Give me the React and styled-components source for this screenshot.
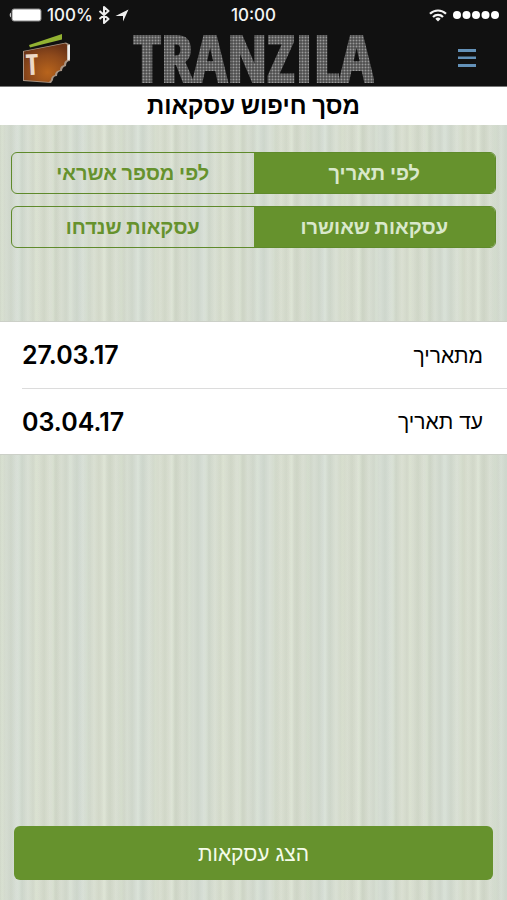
import React, { useState } from "react";
import styled, { createGlobalStyle } from "styled-components";

const GlobalStyle = createGlobalStyle`
  * {
    box-sizing: border-box;
  }
  body {
    margin: 0;
    background: #d3dacb;
    color: #000;
    font-family: Inter, "Liberation Sans", sans-serif;
  }
  button,
  input {
    font-family: inherit;
  }
`;

const Screen = styled.div`
  display: flex;
  flex-direction: column;
  min-height: 100vh;
  background-color: #d6dccf;
  background-image: repeating-linear-gradient(
      90deg,
      rgba(176, 188, 168, 0.14) 0px,
      rgba(255, 255, 255, 0) 3px,
      rgba(240, 246, 238, 0.16) 6px,
      rgba(176, 188, 168, 0.14) 11px
    ),
    repeating-linear-gradient(
      90deg,
      rgba(210, 220, 214, 0) 0px,
      rgba(210, 220, 216, 0.5) 19px,
      rgba(222, 226, 208, 0.3) 37px,
      rgba(210, 220, 214, 0) 61px
    ),
    repeating-linear-gradient(
      90deg,
      rgba(225, 236, 216, 0) 0px,
      rgba(225, 236, 216, 0.4) 2px,
      rgba(190, 198, 180, 0.25) 5px,
      rgba(225, 236, 216, 0) 17px
    );
`;

const TopBar = styled.header`
  background: #111;
  border-bottom: 1px solid #777;
`;

const StatusBar = styled.div`
  display: grid;
  grid-template-columns: 1fr auto 1fr;
  align-items: center;
  height: 30px;
  padding: 0 8px;
  color: #f4f4f4;
  font-size: 17px;
  font-weight: 500;
`;

const StatusGroup = styled.div`
  display: flex;
  align-items: center;
  justify-content: ${({ end }) => (end ? "flex-end" : "flex-start")};
  gap: ${({ end }) => (end ? "6px" : "5px")};
`;

const Brand = styled.div`
  display: grid;
  grid-template-columns: 1fr auto 1fr;
  align-items: center;
  height: 56px;
  padding: 0 21px;
`;

const BrandName = styled.span`
  font-family: "Noto Sans ExtraCondensed", "Open Sans Condensed",
    "Roboto Condensed", "Noto Sans Condensed", "Liberation Sans", sans-serif;
  font-size: 64px;
  font-weight: 700;
  line-height: 56px;
  color: transparent;
  -webkit-text-stroke: 2px transparent;
  background-color: #333;
  background-image: radial-gradient(circle, #9a9a9a 0, #6c6c6c 1px, #333 2px);
  background-size: 3px 3px;
  background-clip: text;
  -webkit-background-clip: text;
`;

const MenuButton = styled.button`
  display: flex;
  justify-self: end;
  padding: 10px;
  border: 0;
  background: none;
  color: #6391b8;
  cursor: pointer;
`;

const Title = styled.h1`
  margin: 0;
  background: #fff;
  font-size: 24px;
  font-weight: 700;
  line-height: 38px;
  text-align: center;
`;

const Filters = styled.div`
  display: flex;
  flex-direction: column;
  gap: 12px;
  padding: 27px 11px 73px;
`;

const Segmented = styled.div`
  display: flex;
  overflow: hidden;
  border: 1px solid #5f8a2b;
  border-radius: 6px;
`;

const Segment = styled.button`
  flex: 1;
  height: 40px;
  padding: 0;
  border: 0;
  background: ${({ selected }) => (selected ? "#66922d" : "transparent")};
  color: ${({ selected }) => (selected ? "#d9e8cb" : "#66922d")};
  font-size: 20px;
  font-weight: 700;
  cursor: pointer;
`;

const DateList = styled.div`
  background: #fff;
  border-top: 1px solid #ccd0c8;
  border-bottom: 1px solid #ccd0c8;
`;

const DateRow = styled.label`
  display: flex;
  align-items: center;
  justify-content: space-between;
  height: 66px;
  margin-left: 22px;
  padding-right: 24px;
  font-size: 21px;

  & + & {
    border-top: 1px solid #dcdcdc;
  }
`;

const DateInput = styled.input`
  width: 140px;
  padding: 0;
  border: 0;
  background: none;
  color: #000;
  font-size: 25px;
  font-weight: 600;
  text-align: left;
`;

const Footer = styled.footer`
  margin-top: auto;
  padding: 20px 14px;
`;

const SubmitButton = styled.button`
  display: block;
  width: 100%;
  height: 54px;
  border: 0;
  border-radius: 6px;
  background: #66922d;
  color: #f4fbe9;
  font-size: 21px;
  cursor: pointer;
`;

const BatteryIcon = () => (
  <svg width="34" height="14" viewBox="0 0 34 14">
    <path d="M3 4.5a3 3 0 0 0 0 5z" fill="#ccc" />
    <rect x="4" y="1" width="29" height="12" rx="2" fill="#fff" stroke="#888" />
  </svg>
);

const BluetoothIcon = () => (
  <svg width="12" height="18" viewBox="0 0 12 18" fill="none">
    <path
      d="M1.5 5l9 8L6 17V1l4.500 4-9 8"
      stroke="#eee"
      strokeWidth="2"
      strokeLinejoin="round"
    />
  </svg>
);

const LocationIcon = () => (
  <svg width="14" height="13" viewBox="0 0 14 13">
    <path d="M13.500 0.500L8 12.500V7H0.500z" fill="#eee" />
  </svg>
);

const WifiIcon = () => (
  <svg width="18" height="13" viewBox="0 0 18 13" fill="none" stroke="#f4f4f4">
    <path d="M1 4.800a11.300 11.300 0 0 1 16 0" strokeWidth="2.200" />
    <path d="M4 8a7 7 0 0 1 10 0" strokeWidth="2.200" />
    <path d="M9 12.500L6.300 9.800a3.800 3.800 0 0 1 5.400 0z" fill="#f4f4f4" stroke="none" />
  </svg>
);

const SignalDots = () => (
  <svg width="46" height="10" viewBox="0 0 46 10" fill="#fff">
    {[4, 13.5, 23, 32.5, 42].map((cx) => (
      <circle key={cx} cx={cx} cy="5" r="4" />
    ))}
  </svg>
);

const WalletLogo = () => (
  <svg width="52" height="52" viewBox="0 0 52 52">
    <defs>
      <radialGradient id="leather" cx="0.55" cy="0.75" r="0.75">
        <stop offset="0" stopColor="#b8641c" />
        <stop offset="0.6" stopColor="#8f4a1b" />
        <stop offset="1" stopColor="#6a3317" />
      </radialGradient>
    </defs>
    <path d="M8 13L41 2v5.500L9 15.500z" fill="#93b232" />
    <path
      d="M2 19L45 10.500l4 2V29q-4 0-4 5-4 1-4 5-5 0-5 5-4 0-4 4l-2 3L2 49z"
      fill="#a89484"
    />
    <path
      d="M3 19.500L44 11.500l2 1V28q-3 1-3 5-4 1-4 5-5 1-5 5-4 1-4 5l-2 2-25-2z"
      fill="url(#leather)"
    />
    <path d="M46.500 13.500l2.500-1v15l-2.500 1z" fill="#eee" />
    <text
      x="5"
      y="43"
      fill="#ecd8c6"
      fontFamily="Noto Sans ExtraCondensed, Open Sans Condensed, Roboto Condensed, Noto Sans Condensed, sans-serif"
      fontSize="29"
      fontWeight="700"
      transform="rotate(-3 12 32)"
    >
      T
    </text>
  </svg>
);

const MenuIcon = () => (
  <svg width="18" height="18" viewBox="0 0 18 18" fill="currentColor">
    <rect y="0" width="18" height="3" />
    <rect y="7.500" width="18" height="2.500" />
    <rect y="15" width="18" height="3" />
  </svg>
);

const SegmentedControl = ({ options, label }) => {
  const [selected, setSelected] = useState(options[0]);
  return (
    <Segmented role="group" aria-label={label}>
      {options.map((option) => (
        <Segment
          key={option}
          type="button"
          selected={option === selected}
          aria-pressed={option === selected}
          onClick={() => setSelected(option)}
        >
          {option}
        </Segment>
      ))}
    </Segmented>
  );
};

const DateField = ({ id, label, initial }) => {
  const [value, setValue] = useState(initial);
  return (
    <DateRow htmlFor={id}>
      <span>{label}</span>
      <DateInput
        id={id}
        dir="ltr"
        value={value}
        onChange={(e) => setValue(e.target.value)}
      />
    </DateRow>
  );
};

const App = () => (
  <>
    <GlobalStyle />
    <Screen>
      <TopBar>
        <StatusBar>
          <StatusGroup>
            <BatteryIcon />
            <span>100%</span>
            <BluetoothIcon />
            <LocationIcon />
          </StatusGroup>
          <span>10:00</span>
          <StatusGroup end>
            <WifiIcon />
            <SignalDots />
          </StatusGroup>
        </StatusBar>
        <Brand>
          <WalletLogo />
          <BrandName>TRANZILA</BrandName>
          <MenuButton type="button" aria-label="תפריט">
            <MenuIcon />
          </MenuButton>
        </Brand>
      </TopBar>
      <Title dir="rtl">מסך חיפוש עסקאות</Title>
      <Filters dir="rtl">
        <SegmentedControl label="חיפוש" options={["לפי תאריך", "לפי מספר אשראי"]} />
        <SegmentedControl label="סטטוס" options={["עסקאות שאושרו", "עסקאות שנדחו"]} />
      </Filters>
      <DateList dir="rtl">
        <DateField id="from" label="מתאריך" initial="27.03.17" />
        <DateField id="to" label="עד תאריך" initial="03.04.17" />
      </DateList>
      <Footer dir="rtl">
        <SubmitButton type="button">הצג עסקאות</SubmitButton>
      </Footer>
    </Screen>
  </>
);

export default App;
